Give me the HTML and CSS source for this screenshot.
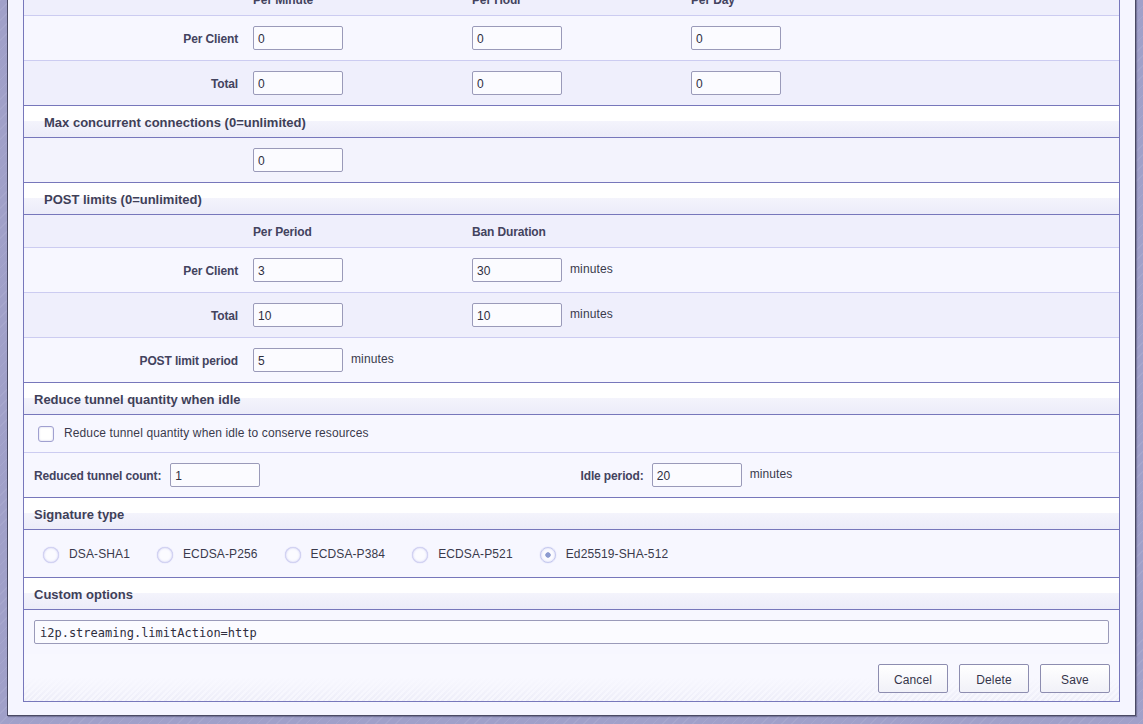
FILE: index.html
```html
<!DOCTYPE html>
<html>
<head>
<meta charset="utf-8">
<title>Edit Tunnel</title>
<link rel="stylesheet" href="styles.css">
</head>
<body>
<div class="panel">
  <form class="tbl">
    <div class="sect indent">Inbound connection limits (0=unlimited)</div>
    <div class="grow hdr">
      <div class="lab"></div>
      <div class="cell">Per Minute</div>
      <div class="cell">Per Hour</div>
      <div class="cell">Per Day</div>
    </div>
    <div class="grow">
      <div class="lab">Per Client</div>
      <div class="cell"><input class="num" type="text" value="0"></div>
      <div class="cell"><input class="num" type="text" value="0"></div>
      <div class="cell"><input class="num" type="text" value="0"></div>
    </div>
    <div class="grow alt end">
      <div class="lab">Total</div>
      <div class="cell"><input class="num" type="text" value="0"></div>
      <div class="cell"><input class="num" type="text" value="0"></div>
      <div class="cell"><input class="num" type="text" value="0"></div>
    </div>

    <div class="sect indent">Max concurrent connections (0=unlimited)</div>
    <div class="grow mid end">
      <div class="lab"></div>
      <div class="cell"><input class="num" type="text" value="0"></div>
      <div class="cell"></div>
      <div class="cell"></div>
    </div>

    <div class="sect indent">POST limits (0=unlimited)</div>
    <div class="grow hdr">
      <div class="lab"></div>
      <div class="cell">Per Period</div>
      <div class="cell">Ban Duration</div>
      <div class="cell"></div>
    </div>
    <div class="grow">
      <div class="lab">Per Client</div>
      <div class="cell"><input class="num" type="text" value="3"></div>
      <div class="cell"><input class="num" type="text" value="30"><span class="unit">minutes</span></div>
      <div class="cell"></div>
    </div>
    <div class="grow alt">
      <div class="lab">Total</div>
      <div class="cell"><input class="num" type="text" value="10"></div>
      <div class="cell"><input class="num" type="text" value="10"><span class="unit">minutes</span></div>
      <div class="cell"></div>
    </div>
    <div class="grow end">
      <div class="lab">POST limit period</div>
      <div class="cell"><input class="num" type="text" value="5"><span class="unit">minutes</span></div>
      <div class="cell"></div>
      <div class="cell"></div>
    </div>

    <div class="sect">Reduce tunnel quantity when idle</div>
    <div class="checkrow">
      <label class="check"><input type="checkbox" class="cb"><span>Reduce tunnel quantity when idle to conserve resources</span></label>
    </div>
    <div class="halfrow end">
      <div class="half"><b class="blab">Reduced tunnel count:</b><input class="num" type="text" value="1"></div>
      <div class="half"><b class="blab">Idle period:</b><input class="num" type="text" value="20"><span class="unit">minutes</span></div>
    </div>

    <div class="sect">Signature type</div>
    <div class="radiorow end">
      <label class="sig"><input type="radio" name="sig" class="rd"><span>DSA-SHA1</span></label>
      <label class="sig"><input type="radio" name="sig" class="rd"><span>ECDSA-P256</span></label>
      <label class="sig"><input type="radio" name="sig" class="rd"><span>ECDSA-P384</span></label>
      <label class="sig"><input type="radio" name="sig" class="rd"><span>ECDSA-P521</span></label>
      <label class="sig"><input type="radio" name="sig" class="rd" checked><span>Ed25519-SHA-512</span></label>
    </div>

    <div class="sect">Custom options</div>
    <div class="customrow end">
      <input class="custom" type="text" value="i2p.streaming.limitAction=http">
    </div>

    <div class="buttonrow">
      <button type="button" class="btn">Cancel</button>
      <button type="button" class="btn">Delete</button>
      <button type="button" class="btn">Save</button>
    </div>
  </form>
</div>
</body>
</html>
```

FILE: styles.css
```css
html, body {
  margin: 0;
  padding: 0;
}

body {
  background-color: #a0a0c9;
  background-image: repeating-linear-gradient(135deg, rgba(255,255,255,0.07) 0 1px, transparent 1px 7px);
  font-family: "Liberation Sans", Arial, sans-serif;
  font-size: 12px;
  letter-spacing: 0.12px;
  color: #3a3a4c;
  height: 724px;
  overflow: hidden;
}

.panel {
  margin: -66px 0 0 7px;
  width: 1097px;
  padding: 15px 15px 13px 15px;
  background: #f5f5ff;
  border: 1px solid #4a4a64;
  box-shadow: 1px 1px 1px rgba(40,40,70,0.35);
}

.tbl {
  display: block;
  margin: 0;
  border: 1px solid #7777bb;
  background: #f8f8ff;
}

.sect {
  height: 29px;
  padding-top: 2px;
  display: flex;
  align-items: center;
  padding-left: 10px;
  font-size: 13px;
  font-weight: bold;
  letter-spacing: 0;
  color: #3f3f58;
  border-bottom: 1px solid #7777bb;
  background: linear-gradient(to bottom, #ffffff 0, #ffffff 47%, #f4f4fc 47%, #ececf9 100%);
}

.sect.indent {
  padding-left: 20px;
}

.grow {
  display: grid;
  grid-template-columns: 222px 219px 219px 1fr;
  align-items: center;
  height: 44px;
  border-bottom: 1px solid #ccccf1;
  background: #f7f7ff;
}

.grow.alt {
  background: #efeffc;
}

.grow.mid {
  background: #f3f3fd;
}

.grow.hdr {
  height: 32px;
  background: #efeffc;
  font-weight: bold;
  letter-spacing: -0.13px;
  color: #43435e;
}

.grow.hdr .cell {
  position: relative;
  top: 1px;
}

.end {
  border-bottom-color: #7777bb !important;
}

.lab {
  position: relative;
  top: 1px;
  text-align: right;
  padding-right: 8px;
  font-weight: bold;
  letter-spacing: -0.13px;
  color: #43435e;
}

.cell {
  display: flex;
  align-items: center;
  gap: 8px;
  padding-left: 7px;
}

.num {
  box-sizing: border-box;
  width: 90px;
  height: 24px;
  margin: 0;
  padding: 1px 4px 0 4px;
  border: 1px solid #9a9ab9;
  border-radius: 2px;
  background: #fbfbff;
  font-family: "Liberation Sans", Arial, sans-serif;
  font-size: 12px;
  letter-spacing: 0.12px;
  color: #2e2e3e;
  outline: none;
}

.unit {
  color: #3a3a4c;
  position: relative;
  top: -1px;
}

.checkrow {
  height: 37px;
  display: flex;
  align-items: center;
  padding-left: 14px;
  border-bottom: 1px solid #ccccf1;
  background: #f7f7ff;
}

.check {
  display: flex;
  align-items: center;
  gap: 10px;
}

.check span {
  position: relative;
  top: -1px;
}

.cb {
  appearance: none;
  -webkit-appearance: none;
  box-sizing: border-box;
  width: 16px;
  height: 16px;
  margin: 1px 0 0 0;
  border: 1px solid #a0a0d0;
  border-radius: 3px;
  background: #ffffff;
  box-shadow: inset 0 0 2px rgba(150,150,210,0.5);
}

.halfrow {
  display: grid;
  grid-template-columns: 1fr 1fr;
  align-items: center;
  height: 44px;
  border-bottom: 1px solid #ccccf1;
  background: #f7f7ff;
}

.half {
  display: flex;
  align-items: center;
  gap: 8px;
  padding-left: 10px;
}

.half:first-child .num {
  margin-left: 1px;
}

.half:last-child {
  padding-left: 9px;
}

.blab {
  position: relative;
  top: 1px;
  letter-spacing: -0.13px;
  color: #43435e;
}

.radiorow {
  height: 47px;
  display: flex;
  align-items: center;
  padding-left: 19px;
  background: #f7f7ff;
  border-bottom: 1px solid #7777bb;
}

.sig {
  display: flex;
  align-items: center;
  gap: 10px;
  margin-right: 27px;
}

.rd {
  appearance: none;
  -webkit-appearance: none;
  box-sizing: border-box;
  width: 16px;
  height: 16px;
  margin: 2px 0 0 0;
  border: 1px solid #d2d2f2;
  border-radius: 50%;
  background: #fbfbff;
  box-shadow: 0 0 1px rgba(170,170,230,0.8), inset 0 0 2px rgba(190,190,240,0.7);
}

.rd:checked {
  border-color: #c4c8ee;
  background: radial-gradient(circle, #8c9bd0 0, #8c9bd0 2.4px, #fbfbff 3px);
}

.customrow {
  height: 44px;
  display: flex;
  align-items: center;
  padding: 0 10px;
  background: #f7f7ff;
}

.custom {
  box-sizing: border-box;
  width: 100%;
  height: 24px;
  margin: 0;
  padding: 1px 5px 0 5px;
  border: 1px solid #9a9ab9;
  border-radius: 2px;
  background: #fbfbff;
  font-family: "DejaVu Sans Mono", "Liberation Mono", monospace;
  font-size: 12px;
  letter-spacing: 0;
  color: #2e2e3e;
  outline: none;
}

.buttonrow {
  height: 47px;
  display: flex;
  align-items: center;
  justify-content: flex-end;
  gap: 11px;
  padding-right: 9px;
  background:
    linear-gradient(to bottom, #f8f8ff 0, #f8f8ff 50%, rgba(248,248,255,0) 100%),
    repeating-linear-gradient(135deg, #eeeef9 0 2px, #f6f6fd 2px 4px);
}

.btn {
  box-sizing: border-box;
  width: 70px;
  height: 29px;
  margin: 1px 0 0 0;
  padding: 4px 0 0 0;
  border: 1px solid #8d8db0;
  border-radius: 2px;
  background: linear-gradient(to bottom, #ffffff, #f1f1f8);
  font-family: "Liberation Sans", Arial, sans-serif;
  font-size: 12px;
  letter-spacing: 0.12px;
  color: #35354a;
}
```
